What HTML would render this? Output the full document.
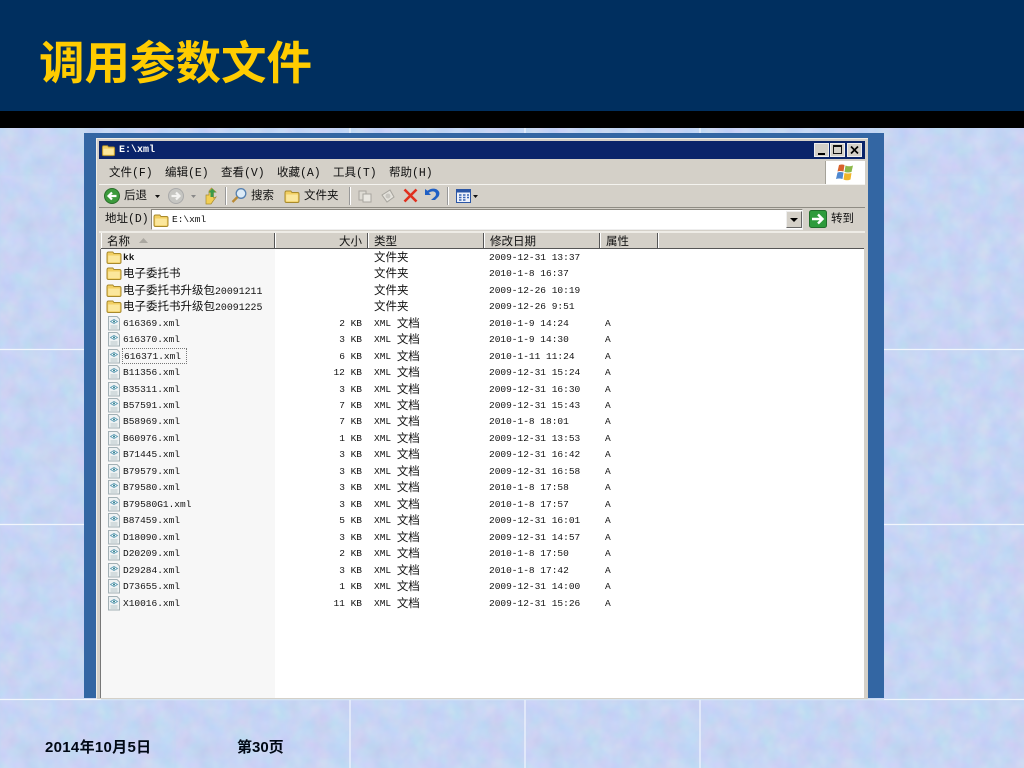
<!DOCTYPE html>
<html lang="zh"><head><meta charset="utf-8"><title>调用参数文件</title>
<style>
html,body{margin:0;padding:0}
body{width:1024px;height:768px;overflow:hidden;position:relative;background:#bcd2f0;font-family:"Liberation Sans","Noto Sans CJK SC",sans-serif}
.a,.a *{position:absolute}
.a{left:0;top:0}
div,span{white-space:nowrap}
.t{font:11.5px/14px "Liberation Mono","Noto Sans CJK SC",monospace;color:#111;letter-spacing:0}
.r{left:101px;width:764px;height:16px;font:9.5px/16px "Liberation Mono","Noto Sans CJK SC",monospace;color:#111}
.r span,.r b{top:1px}
.r b{font-weight:400;font-size:11.5px}
.r b.y,.r b.n{top:2px}
.y b{position:relative!important;top:1px}
.n{left:22px}.s{right:503px;text-align:right}.y{left:273px}.d{left:388px}.at{left:504px}
.r svg{left:5px;top:0}
.h{top:233px;height:15px;background:#d4d0c8;border-right:1px solid #555;border-left:1px solid #fff;font:11.5px/17px "Noto Sans CJK SC",sans-serif;color:#111;box-sizing:border-box}
.h span{top:0}
</style></head><body>
<svg class="a" width="1024" height="768" style="left:0;top:0">
<defs>
<filter id="n" x="0" y="0" width="100%" height="100%" color-interpolation-filters="sRGB">
<feTurbulence type="fractalNoise" baseFrequency="0.05" numOctaves="3" seed="7" stitchTiles="stitch"/>
<feColorMatrix type="matrix" values="0.28 0 0 0 0.64  0 0.2 0 0 0.72  0 0 0.1 0 0.89  0 0 0 0 1"/>
<feGaussianBlur stdDeviation="0.8"/>
</filter>
<pattern id="p" x="0" y="0" width="175" height="175" patternUnits="userSpaceOnUse"><rect width="175" height="175" filter="url(#n)"/></pattern>
<symbol id="f" viewBox="0 0 16 16"><path d="M1 5V13Q1 14.500 2.500 14.500H13.500Q15 14.500 15 13V6Q15 4.500 13.500 4.500H8L6.800 3H2.500Q1 3 1 5Z" fill="#f2cf62" stroke="#a88a2c"/><path d="M2.200 6.500H13.800V13.300H2.200Z" fill="#fbe79c"/></symbol>
<symbol id="x" viewBox="0 0 16 16"><path d="M2.500 1.500H11L13.500 4V15H2.500Z" fill="#eef2f3" stroke="#a3b0b5"/><path d="M4.500 11H11.500M4.500 13H11.500" stroke="#b8c5c9"/><path d="M4.500 6.500L8 4.500 11.500 6.500 8 8.500Z" fill="#fff" stroke="#5a9ab5" stroke-width=".8"/><circle cx="8" cy="6.500" r="1" fill="#2f7f8a"/></symbol>
</defs>
<rect width="1024" height="768" fill="url(#p)"/>
<rect width="1024" height="768" fill="#c6d8f8" opacity=".52"/>
<path d="M350 699V768M525 699V768M700 699V768M350 128V133M525 128V133M700 128V133M884 349.500H1024M884 524.500H1024M884 699.500H1024M0 349.500H84M0 524.500H84M0 699.500H1024" stroke="#f2f6fc" stroke-width="1.200" fill="none"/>
</svg>

<!-- header -->
<div class="a" style="width:1024px;height:111px;background:#002f5f"></div>
<div class="a" style="top:111px;width:1024px;height:17px;background:#000"></div>
<div class="a" style="left:39px;top:29px;font:700 45.500px/62px 'Noto Sans CJK SC',sans-serif;color:#ffcc00;letter-spacing:0">调用参数文件</div>

<!-- blue frame -->
<div class="a" style="left:84px;top:133px;width:800px;height:565px;background:#3366a3"></div>
<!-- window -->
<div class="a" style="left:96px;top:138px;width:771px;height:560px;background:#d4d0c8;border-left:1px solid #f0eee8;border-top:1px solid #f0eee8"></div>
<div class="a" style="left:99px;top:141px;width:766px;height:18px;background:#0a246a"></div>
<svg class="a" style="left:101px;top:143px" width="15" height="14"><use href="#f" width="15" height="14"/></svg>
<div class="a" style="left:119px;top:144px;font:700 10px/14px 'Liberation Mono',monospace;color:#fff">E:\xml</div>
<!-- window buttons -->
<div class="a" style="left:814px;top:143px;width:15px;height:14px;background:#d4d0c8;border:1px solid #eee;box-sizing:border-box"><div style="left:3px;top:9px;width:7px;height:2px;background:#000"></div></div>
<div class="a" style="left:830px;top:143px;width:15px;height:14px;background:#d4d0c8;border:1px solid #eee;box-sizing:border-box"><div style="left:2px;top:1px;width:9px;height:9px;border:1px solid #111;border-top-width:2px;box-sizing:border-box"></div></div>
<div class="a" style="left:847px;top:143px;width:15px;height:14px;background:#d4d0c8;border:1px solid #eee;box-sizing:border-box"><svg style="left:2px;top:2px" width="9" height="8"><path d="M1 0.500L8 7.500M8 0.500L1 7.500" stroke="#000" stroke-width="1.700"/></svg></div>

<!-- menu bar -->
<div class="a" style="left:99px;top:160px;width:766px;height:24px;border-bottom:1px solid #9a968d"></div>
<div class="a t" style="left:109px;top:167px">文件(F)</div>
<div class="a t" style="left:165px;top:167px">编辑(E)</div>
<div class="a t" style="left:221px;top:167px">查看(V)</div>
<div class="a t" style="left:277px;top:167px">收藏(A)</div>
<div class="a t" style="left:333px;top:167px">工具(T)</div>
<div class="a t" style="left:389px;top:167px">帮助(H)</div>
<div class="a" style="left:825px;top:161px;width:39px;height:23px;background:#fff;border-left:1px solid #a5a299"></div>
<svg class="a" style="left:835px;top:163px" width="20" height="19"><path d="M4 2Q7 1 9.500 2L8.500 8.500Q5 7.500 2.500 8.500Z" fill="#d8622c"/><path d="M10.500 2.500Q14 4 18 2.500L16.500 9Q13 10 9.500 9Z" fill="#8cb84a"/><path d="M2.500 9.500Q5 8.500 8.500 9.500L7.500 16Q4 15 1 16Z" fill="#4f88d0"/><path d="M9.500 10Q13 11 16.500 10L15.500 16.500Q12 18 8.500 16.500Z" fill="#f0b52a"/></svg>

<!-- toolbar -->
<div class="a" style="left:99px;top:184px;width:766px;height:24px;border-bottom:1px solid #8f8c84;border-top:1px solid #f4f3ef;box-sizing:border-box"></div>
<svg class="a" style="left:104px;top:188px" width="16" height="16"><circle cx="8" cy="8" r="7.500" fill="#3c9a3c" stroke="#2a6f2a"/><path d="M12.500 8H5M8 4.500L4.500 8 8 11.500" stroke="#fff" stroke-width="2.200" fill="none"/></svg>
<div class="a t" style="left:124px;top:190px">后退</div>
<svg class="a" style="left:155px;top:195px" width="5" height="3"><path d="M0 0H5L2.500 3Z" fill="#111"/></svg>
<svg class="a" style="left:168px;top:188px" width="16" height="16"><circle cx="8" cy="8" r="7.500" fill="#c6c6c2" stroke="#aaa"/><path d="M3.500 8H11M8 4.500L11.500 8 8 11.500" stroke="#f4f4f2" stroke-width="2.200" fill="none"/></svg>
<svg class="a" style="left:191px;top:195px" width="5" height="3"><path d="M0 0H5L2.500 3Z" fill="#888"/></svg>
<svg class="a" style="left:203px;top:187px" width="16" height="18"><path d="M3 8H6V4L8.500 1 13 5H10.500V11L13 10 8 17H3Z" fill="#f2cf55" stroke="#a98c2f" stroke-width=".7"/><path d="M9 1.500L13 5.500H10.500V10H7.500V5.500H5.500Z" fill="#3a9a4a"/></svg>
<div class="a" style="left:225px;top:187px;width:1px;height:18px;background:#999;border-right:1px solid #fff"></div>
<svg class="a" style="left:231px;top:187px" width="17" height="17"><circle cx="10" cy="6.500" r="4.800" fill="#dcebf7" stroke="#5580b0" stroke-width="1.300"/><path d="M6.500 10L1.500 15" stroke="#b98a35" stroke-width="2.300"/></svg>
<div class="a t" style="left:251px;top:190px">搜索</div>
<svg class="a" style="left:284px;top:188px" width="16" height="16"><use href="#f" width="16" height="16"/></svg>
<div class="a t" style="left:304px;top:190px">文件夹</div>
<div class="a" style="left:349px;top:187px;width:1px;height:18px;background:#999;border-right:1px solid #fff"></div>
<svg class="a" style="left:357px;top:188px" width="16" height="16"><path d="M2 3H9V12H2Z" fill="#dedbd4" stroke="#a7a59e"/><path d="M6 6H14V14H6Z" fill="#e9e7e1" stroke="#a7a59e"/></svg>
<svg class="a" style="left:380px;top:188px" width="16" height="16"><path d="M2 7L10 2 14 9 7 14Z" fill="#e4e2dc" stroke="#a7a59e"/><circle cx="8" cy="8" r="2.500" fill="#c8c6c0"/></svg>
<svg class="a" style="left:403px;top:188px" width="15" height="15"><path d="M1.500 1.500L13.500 13.500M13.500 1.500L1.500 13.500" stroke="#e0301e" stroke-width="2.600"/></svg>
<svg class="a" style="left:424px;top:187px" width="17" height="15"><path d="M1 2V8H7L4.700 5.800Q8 3.500 11 5 13 7 11 9.500L7 13H11L14.500 9.500Q17 5 12.500 2.300 8 .5 3.500 3.800Z" fill="#1f5fc4"/></svg>
<div class="a" style="left:447px;top:187px;width:1px;height:18px;background:#999;border-right:1px solid #fff"></div>
<svg class="a" style="left:456px;top:189px" width="22" height="14"><rect x=".5" y=".5" width="14" height="13" fill="#eef2fb" stroke="#2a55a5"/><path d="M1 1H14V3.500H1Z" fill="#2a55a5"/><path d="M3 6H5.500M7 6H9.500M11 6H13M3 8.500H5.500M7 8.500H9.500M11 8.500H13M3 11H5.500M7 11H9.500" stroke="#3a66b5" stroke-width="1.500"/><path d="M17 6H22L19.500 9Z" fill="#111"/></svg>

<!-- address -->
<div class="a t" style="left:105px;top:213px">地址(D)</div>
<div class="a" style="left:151px;top:209px;width:652px;height:21px;background:#fff;border:1px solid #8a877f;border-right-color:#eee;border-bottom-color:#eee;box-sizing:border-box"></div>
<svg class="a" style="left:153px;top:212px" width="16" height="16"><use href="#f" width="16" height="16"/></svg>
<div class="a" style="left:172px;top:213px;font:9.500px/14px 'Liberation Mono',monospace;color:#111">E:\xml</div>
<div class="a" style="left:786px;top:211px;width:16px;height:17px;background:#d4d0c8;border:1px solid #666;border-top-color:#eee;border-left-color:#eee;box-sizing:border-box"><svg style="left:3px;top:6px" width="8" height="4"><path d="M0 0H8L4 4Z" fill="#000"/></svg></div>
<svg class="a" style="left:809px;top:210px" width="18" height="18"><rect x=".5" y=".5" width="17" height="17" rx="2" fill="#2e9b3c" stroke="#1f6e2a"/><path d="M3 9H13M9 4.500L13.500 9 9 13.500" stroke="#fff" stroke-width="2.400" fill="none"/></svg>
<div class="a t" style="left:831px;top:213px">转到</div>

<!-- column headers -->
<div class="a" style="left:99px;top:231px;width:766px;height:2px;background:#eeece6"></div>
<div class="h a" style="left:101px;width:174px"><span style="left:5px">名称</span><svg style="left:37px;top:5px" width="9" height="5"><path d="M0 5L4.500 0 9 5Z" fill="#aaa7a0"/></svg></div>
<div class="h a" style="left:275px;width:93px"><span style="right:5px">大小</span></div>
<div class="h a" style="left:368px;width:116px"><span style="left:5px">类型</span></div>
<div class="h a" style="left:484px;width:116px"><span style="left:5px">修改日期</span></div>
<div class="h a" style="left:600px;width:58px"><span style="left:5px">属性</span></div>
<div class="h a" style="left:658px;width:206px;border-right:0"></div>
<div class="a" style="left:101px;top:248px;width:763px;height:1px;background:#555"></div>

<!-- list -->
<div class="a" style="left:100px;top:249px;width:1px;height:449px;background:#777"></div>
<div class="a" style="left:101px;top:249px;width:174px;height:449px;background:#f7f7f7"></div>
<div class="a" style="left:275px;top:249px;width:589px;height:449px;background:#fff"></div>
<div class="a" style="left:101px;top:699px;width:783px;height:1px;background:#d5e4f2"></div>

<div class="a r" style="top:249px"><svg width="16" height="16"><use href="#f" width="16" height="16"/></svg><span class="n" style="font-weight:700">kk</span><b class="y">文件夹</b><span class="d">2009-12-31 13:37</span></div>
<div class="a r" style="top:265px"><svg width="16" height="16"><use href="#f" width="16" height="16"/></svg><b class="n">电子委托书</b><b class="y">文件夹</b><span class="d">2010-1-8 16:37</span></div>
<div class="a r" style="top:282px"><svg width="16" height="16"><use href="#f" width="16" height="16"/></svg><b class="n">电子委托书升级包<span style="position:static;font-size:9.900px">20091211</span></b><b class="y">文件夹</b><span class="d">2009-12-26 10:19</span></div>
<div class="a r" style="top:298px"><svg width="16" height="16"><use href="#f" width="16" height="16"/></svg><b class="n">电子委托书升级包<span style="position:static;font-size:9.900px">20091225</span></b><b class="y">文件夹</b><span class="d">2009-12-26 9:51</span></div>
<div class="a r" style="top:315px"><svg width="16" height="16"><use href="#x" width="16" height="16"/></svg><span class="n">616369.xml</span><span class="s">2 KB</span><span class="y">XML <b style="position:static">文档</b></span><span class="d">2010-1-9 14:24</span><span class="at">A</span></div>
<div class="a r" style="top:331px"><svg width="16" height="16"><use href="#x" width="16" height="16"/></svg><span class="n">616370.xml</span><span class="s">3 KB</span><span class="y">XML <b style="position:static">文档</b></span><span class="d">2010-1-9 14:30</span><span class="at">A</span></div>
<div class="a r" style="top:348px"><svg width="16" height="16"><use href="#x" width="16" height="16"/></svg><span class="n" style="left:21px;top:0;width:65px;height:16px;border:1px dotted #777;line-height:16px;padding-left:1px;box-sizing:border-box">616371.xml</span><span class="s">6 KB</span><span class="y">XML <b style="position:static">文档</b></span><span class="d">2010-1-11 11:24</span><span class="at">A</span></div>
<div class="a r" style="top:364px"><svg width="16" height="16"><use href="#x" width="16" height="16"/></svg><span class="n">B11356.xml</span><span class="s">12 KB</span><span class="y">XML <b style="position:static">文档</b></span><span class="d">2009-12-31 15:24</span><span class="at">A</span></div>
<div class="a r" style="top:381px"><svg width="16" height="16"><use href="#x" width="16" height="16"/></svg><span class="n">B35311.xml</span><span class="s">3 KB</span><span class="y">XML <b style="position:static">文档</b></span><span class="d">2009-12-31 16:30</span><span class="at">A</span></div>
<div class="a r" style="top:397px"><svg width="16" height="16"><use href="#x" width="16" height="16"/></svg><span class="n">B57591.xml</span><span class="s">7 KB</span><span class="y">XML <b style="position:static">文档</b></span><span class="d">2009-12-31 15:43</span><span class="at">A</span></div>
<div class="a r" style="top:413px"><svg width="16" height="16"><use href="#x" width="16" height="16"/></svg><span class="n">B58969.xml</span><span class="s">7 KB</span><span class="y">XML <b style="position:static">文档</b></span><span class="d">2010-1-8 18:01</span><span class="at">A</span></div>
<div class="a r" style="top:430px"><svg width="16" height="16"><use href="#x" width="16" height="16"/></svg><span class="n">B60976.xml</span><span class="s">1 KB</span><span class="y">XML <b style="position:static">文档</b></span><span class="d">2009-12-31 13:53</span><span class="at">A</span></div>
<div class="a r" style="top:446px"><svg width="16" height="16"><use href="#x" width="16" height="16"/></svg><span class="n">B71445.xml</span><span class="s">3 KB</span><span class="y">XML <b style="position:static">文档</b></span><span class="d">2009-12-31 16:42</span><span class="at">A</span></div>
<div class="a r" style="top:463px"><svg width="16" height="16"><use href="#x" width="16" height="16"/></svg><span class="n">B79579.xml</span><span class="s">3 KB</span><span class="y">XML <b style="position:static">文档</b></span><span class="d">2009-12-31 16:58</span><span class="at">A</span></div>
<div class="a r" style="top:479px"><svg width="16" height="16"><use href="#x" width="16" height="16"/></svg><span class="n">B79580.xml</span><span class="s">3 KB</span><span class="y">XML <b style="position:static">文档</b></span><span class="d">2010-1-8 17:58</span><span class="at">A</span></div>
<div class="a r" style="top:496px"><svg width="16" height="16"><use href="#x" width="16" height="16"/></svg><span class="n">B79580G1.xml</span><span class="s">3 KB</span><span class="y">XML <b style="position:static">文档</b></span><span class="d">2010-1-8 17:57</span><span class="at">A</span></div>
<div class="a r" style="top:512px"><svg width="16" height="16"><use href="#x" width="16" height="16"/></svg><span class="n">B87459.xml</span><span class="s">5 KB</span><span class="y">XML <b style="position:static">文档</b></span><span class="d">2009-12-31 16:01</span><span class="at">A</span></div>
<div class="a r" style="top:529px"><svg width="16" height="16"><use href="#x" width="16" height="16"/></svg><span class="n">D18090.xml</span><span class="s">3 KB</span><span class="y">XML <b style="position:static">文档</b></span><span class="d">2009-12-31 14:57</span><span class="at">A</span></div>
<div class="a r" style="top:545px"><svg width="16" height="16"><use href="#x" width="16" height="16"/></svg><span class="n">D20209.xml</span><span class="s">2 KB</span><span class="y">XML <b style="position:static">文档</b></span><span class="d">2010-1-8 17:50</span><span class="at">A</span></div>
<div class="a r" style="top:562px"><svg width="16" height="16"><use href="#x" width="16" height="16"/></svg><span class="n">D29284.xml</span><span class="s">3 KB</span><span class="y">XML <b style="position:static">文档</b></span><span class="d">2010-1-8 17:42</span><span class="at">A</span></div>
<div class="a r" style="top:578px"><svg width="16" height="16"><use href="#x" width="16" height="16"/></svg><span class="n">D73655.xml</span><span class="s">1 KB</span><span class="y">XML <b style="position:static">文档</b></span><span class="d">2009-12-31 14:00</span><span class="at">A</span></div>
<div class="a r" style="top:595px"><svg width="16" height="16"><use href="#x" width="16" height="16"/></svg><span class="n">X10016.xml</span><span class="s">11 KB</span><span class="y">XML <b style="position:static">文档</b></span><span class="d">2009-12-31 15:26</span><span class="at">A</span></div>

<!-- footer -->
<div class="a" style="left:45px;top:739px;font:700 15px/18px 'Liberation Sans','Noto Sans CJK SC',sans-serif;color:#000814;letter-spacing:.3px">2014年10月5日</div>
<div class="a" style="left:237px;top:739px;font:700 15px/18px 'Liberation Sans','Noto Sans CJK SC',sans-serif;color:#000814">第30页</div>
</body></html>
